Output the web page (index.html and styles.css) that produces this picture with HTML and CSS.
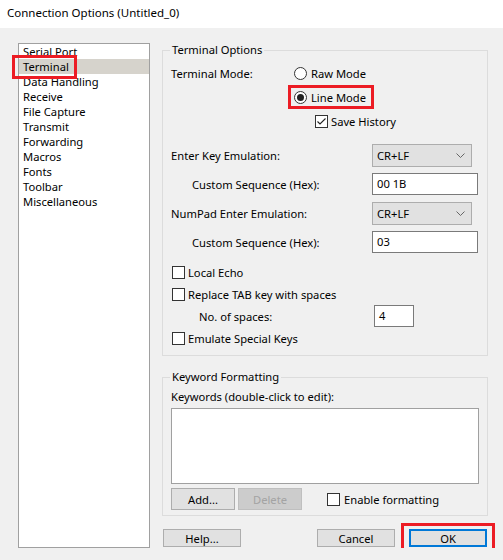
FILE: index.html
```html
<!DOCTYPE html>
<html lang="en">
<head>
    <meta charset="UTF-8">
    <title>Connection Options (Untitled_0)</title>
    <link rel="stylesheet" href="styles.css">
</head>
<body>
    <div class="titlebar">Connection Options (Untitled_0)</div>

    <div class="dialog">
        <!-- Category list -->
        <ul class="nav">
            <li>Serial Port</li>
            <li class="selected"><span class="mark"></span>Terminal</li>
            <li>Data Handling</li>
            <li>Receive</li>
            <li>File Capture</li>
            <li>Transmit</li>
            <li>Forwarding</li>
            <li>Macros</li>
            <li>Fonts</li>
            <li>Toolbar</li>
            <li>Miscellaneous</li>
        </ul>

        <div class="pane">
            <!-- Terminal Options -->
            <fieldset class="group terminal">
                <legend>Terminal Options</legend>
                <div class="row mode-row">
                    <span class="label mode-label">Terminal Mode:</span>
                    <span class="radio"><span class="dot"></span>Raw Mode</span>
                </div>
                <div class="row line-row">
                    <span class="radio on highlight"><span class="dot"></span>Line Mode</span>
                </div>
                <div class="row history-row">
                    <span class="check">
                        <span class="box"><svg width="11" height="11" viewBox="0 0 11 11"><path d="M1.5 5.5 L4 8 L9.5 2.5" fill="none" stroke="#222" stroke-width="1.1"/></svg></span>
                        Save History
                    </span>
                </div>

                <div class="row field enter-row">
                    <span class="label">Enter Key Emulation:</span>
                    <div class="combo">CR+LF<svg width="9" height="5" viewBox="0 0 9 5"><path d="M0.5 0.5 L4.5 4.5 L8.5 0.5" fill="none" stroke="#666" stroke-width="1"/></svg></div>
                </div>
                <div class="row field seq-row">
                    <span class="label indent">Custom Sequence (Hex):</span>
                    <div class="edit">00 1B</div>
                </div>
                <div class="row field numpad-row">
                    <span class="label">NumPad Enter Emulation:</span>
                    <div class="combo">CR+LF<svg width="9" height="5" viewBox="0 0 9 5"><path d="M0.5 0.5 L4.5 4.5 L8.5 0.5" fill="none" stroke="#666" stroke-width="1"/></svg></div>
                </div>
                <div class="row field seq-row">
                    <span class="label indent">Custom Sequence (Hex):</span>
                    <div class="edit">03</div>
                </div>

                <div class="row echo-row">
                    <span class="check"><span class="box"></span>Local Echo</span>
                </div>
                <div class="row">
                    <span class="check"><span class="box"></span>Replace TAB key with spaces</span>
                </div>
                <div class="row field">
                    <span class="label spaces">No. of spaces:</span>
                    <div class="edit small">4</div>
                </div>
                <div class="row">
                    <span class="check"><span class="box"></span>Emulate Special Keys</span>
                </div>
            </fieldset>

            <!-- Keyword Formatting -->
            <fieldset class="group keywords">
                <legend>Keyword Formatting</legend>
                <div class="kw-label">Keywords (double-click to edit):</div>
                <div class="kw-list"></div>
                <div class="kw-actions">
                    <button class="btn">Add...</button>
                    <button class="btn" disabled>Delete</button>
                    <span class="check enable"><span class="box"></span>Enable formatting</span>
                </div>
            </fieldset>

            <div class="buttons">
                <button class="btn wide help">Help...</button>
                <button class="btn wide cancel">Cancel</button>
                <span class="ok-mark"><button class="btn wide default">OK</button></span>
            </div>
        </div>
    </div>
</body>
</html>
```

FILE: styles.css
```css
body {
    margin: 0;
    background: #f0f0f0;
    font-family: "Noto Sans", sans-serif;
    font-size: 11.2px;
    color: #000;
}
.titlebar {
    height: 28px;
    line-height: 26px;
    padding-left: 7px;
    background: #fff;
    font-size: 11.5px;
}
.dialog {
    display: flex;
    gap: 12px;
    padding: 15px 0 0 18px;
}

/* category list */
.nav {
    list-style: none;
    margin: 0;
    padding: 0;
    width: 130px;
    height: 503px;
    border: 1px solid #a0a0a0;
    background: #fff;
}
.nav li {
    height: 15px;
    line-height: 15px;
    padding-left: 4px;
    white-space: nowrap;
}
.nav .selected {
    position: relative;
    background: #d6d3cc;
}
.mark {
    position: absolute;
    left: -7px;
    top: -4px;
    width: 59px;
    height: 18px;
    border: 3px solid #ec1c24;
}

/* right side */
.pane {
    width: 326px;
    display: flex;
    flex-direction: column;
}
.group {
    margin: 0;
    padding: 0 8px;
    border: 1px solid #dcdcdc;
    min-width: 0;
}
.group legend {
    padding: 0 2px;
    margin-left: -1px;
    line-height: 16px;
}
.terminal {
    margin-top: -1px;
    padding-bottom: 6px;
}
.keywords {
    margin-top: 13px;
    padding-bottom: 5px;
}

.row {
    display: flex;
    align-items: center;
    height: 22px;
    white-space: nowrap;
}
.mode-row {
    height: 24px;
    margin-top: 3px;
}
.line-row,
.history-row {
    height: 24px;
}
.mode-label {
    width: 123px;
}
.history-row .check {
    margin-left: 144px;
}
.enter-row {
    height: 23px;
    margin-top: 11px;
}
.seq-row {
    margin-top: 6px;
}
.numpad-row {
    height: 23px;
    margin-top: 7px;
}
.echo-row {
    margin-top: 8px;
}
.field .label {
    width: 201px;
    box-sizing: border-box;
}
.field .indent {
    padding-left: 21px;
}
.field .spaces {
    width: 203px;
    padding-left: 28px;
}

/* radio buttons and check boxes */
.radio,
.check {
    display: flex;
    align-items: center;
    gap: 4px;
}
.dot {
    width: 11px;
    height: 11px;
    border: 1px solid #333;
    border-radius: 50%;
    background: #fff;
    display: flex;
    align-items: center;
    justify-content: center;
}
.radio.on .dot::after {
    content: "";
    width: 7px;
    height: 7px;
    border-radius: 50%;
    background: #222;
}
.highlight {
    box-sizing: border-box;
    width: 86px;
    height: 24px;
    margin-left: 117px;
    padding: 0 3px;
    border: 3px solid #ec1c24;
}
.check {
    margin-left: 1px;
    gap: 3px;
}
.box {
    width: 11px;
    height: 11px;
    border: 1px solid #333;
    background: #fff;
    display: flex;
}

/* combos and edit fields */
.combo {
    box-sizing: border-box;
    width: 100px;
    height: 23px;
    padding: 0 6px 0 4px;
    display: flex;
    align-items: center;
    justify-content: space-between;
    background: #e1e1e1;
    border: 1px solid #adadad;
}
.edit {
    box-sizing: border-box;
    width: 106px;
    height: 22px;
    line-height: 20px;
    padding-left: 4px;
    background: #fff;
    border: 1px solid #7a7a7a;
}
.edit.small {
    width: 40px;
}

/* keyword list */
.kw-label {
    margin-top: 4px;
    line-height: 16px;
}
.kw-list {
    width: 308px;
    height: 76px;
    margin-top: 3px;
    box-sizing: border-box;
    background: #fff;
    border: 1px solid #a0a0a0;
}
.kw-actions {
    display: flex;
    align-items: center;
    gap: 3px;
    margin-top: 4px;
    height: 22px;
}
.kw-actions .btn {
    width: 64px;
    height: 22px;
}
.enable {
    margin-left: 22px;
    gap: 4px;
}

/* buttons */
.btn {
    box-sizing: border-box;
    padding: 0;
    font: inherit;
    color: #000;
    background: #e1e1e1;
    border: 1px solid #adadad;
}
.btn:disabled {
    color: #a3a3a3;
    background: #cccccc;
    border-color: #bfbfbf;
}
.buttons {
    display: flex;
    align-items: center;
    margin-top: 13px;
    padding-right: 1px;
}
.btn.wide {
    width: 78px;
    height: 18px;
}
.help {
    margin-left: 1px;
    margin-right: auto;
}
.cancel {
    margin-right: 14px;
}
.ok-mark {
    display: flex;
    margin: -6px -8px -7px -8px;
    padding: 3px 5px 4px 5px;
    border: 3px solid #ec1c24;
}
.btn.default {
    border: 2px solid #0078d7;
}
```
